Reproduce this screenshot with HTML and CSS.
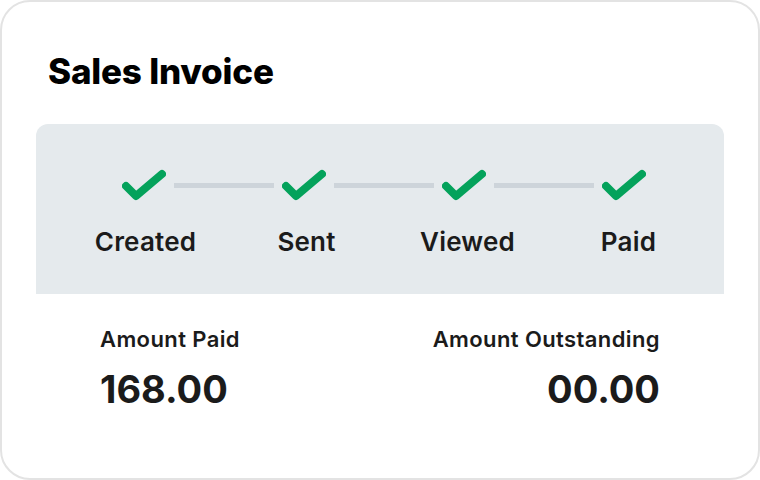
FILE: index.html
```html
<!DOCTYPE html>
<html>
<head>
  <meta charset="utf-8" />
  <title>Sales Invoice</title>
  <link rel="stylesheet" href="styles.css">
</head>
<body>

<div class="card">
  <h1 class="title">Sales Invoice</h1>

  <div class="progress">
    <div class="track">
      <svg class="tick" viewBox="0 0 44 34"><polyline points="4,18 14,28 40,6" /></svg>
      <span class="bar"></span>
      <svg class="tick" viewBox="0 0 44 34"><polyline points="4,18 14,28 40,6" /></svg>
      <span class="bar"></span>
      <svg class="tick" viewBox="0 0 44 34"><polyline points="4,18 14,28 40,6" /></svg>
      <span class="bar"></span>
      <svg class="tick" viewBox="0 0 44 34"><polyline points="4,18 14,28 40,6" /></svg>
    </div>
    <div class="labels">
      <span>Created</span>
      <span>Sent</span>
      <span>Viewed</span>
      <span>Paid</span>
    </div>
  </div>

  <div class="amounts">
    <div class="amount">
      <div class="amount-label">Amount Paid</div>
      <div class="amount-value">168.00</div>
    </div>
    <div class="amount right">
      <div class="amount-label">Amount Outstanding</div>
      <div class="amount-value">00.00</div>
    </div>
  </div>
</div>

</body>
</html>
```

FILE: styles.css
```css
body {
    margin: 0;
    background: #fff;
    font-family: Inter, "Noto Sans", sans-serif;
    color: #1b1b1b;
}
.card {
    width: 760px;
    height: 480px;
    box-sizing: border-box;
    border: 2px solid #e3e3e3;
    border-radius: 30px;
    padding: 49px 34px 0;
}
.title {
    margin: 0 0 33px 12px;
    font-size: 35px;
    line-height: 40px;
    font-weight: 800;
    color: #000;
    letter-spacing: -0.2px;
}
.progress {
    background: #e5eaed;
    border-radius: 12px 12px 0 0;
    height: 170px;
    box-sizing: border-box;
    padding-top: 44px;
}
.track {
    display: flex;
    align-items: center;
    gap: 8px;
    margin-left: 86px;
}
.tick {
    width: 44px;
    height: 34px;
    display: block;
}
.tick polyline {
    fill: none;
    stroke: #04a25b;
    stroke-width: 8;
    stroke-linecap: round;
    stroke-linejoin: round;
}
.bar {
    width: 100px;
    height: 5px;
    background: #cdd4da;
}
.labels {
    display: grid;
    grid-template-columns: repeat(4, 161px);
    margin: 25px 0 0 29px;
    font-size: 26px;
    line-height: 30px;
    font-weight: 600;
    letter-spacing: 0.2px;
    text-align: center;
}
.amounts {
    display: flex;
    justify-content: space-between;
    padding: 33px 64px 0;
}
.amount-label {
    font-size: 22px;
    line-height: 24px;
    font-weight: 600;
    letter-spacing: 0.4px;
}
.amount-value {
    margin-top: 16px;
    font-size: 38px;
    line-height: 44px;
    font-weight: 700;
}
.right {
    text-align: right;
}
```
